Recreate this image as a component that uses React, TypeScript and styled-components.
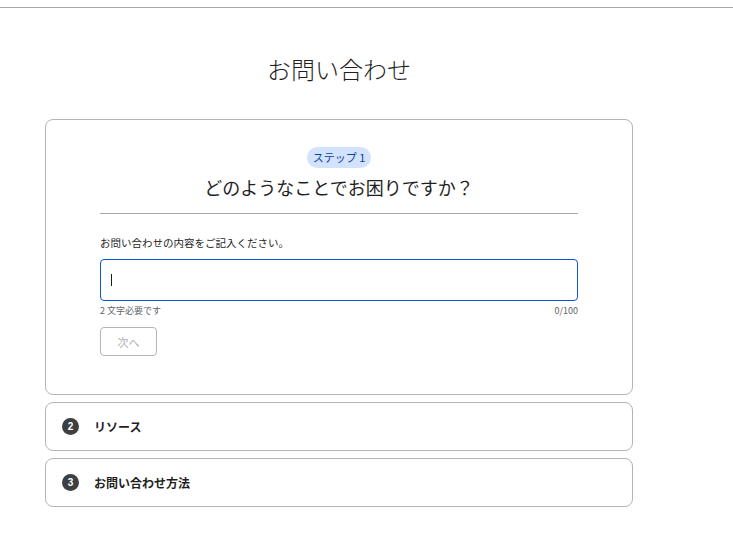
import { FC } from 'react';
import styled, { createGlobalStyle } from 'styled-components';

const colors = {
  text: '#1f1f1f',
  muted: '#5f6368',
  border: '#b4b4b4',
  line: '#a8a8a8',
  blue: '#0b57d0',
  pill: '#d3e3fd',
  pillText: '#0842a0',
  badge: '#3c4043',
};

const GlobalStyle = createGlobalStyle`
  body {
    margin: 0;
    background: #fff;
    font-family: "Noto Sans CJK JP", "Noto Sans", sans-serif;
    color: ${colors.text};
  }
`;

interface StepRowProps {
  num: number;
  label: string;
}

const StepRow: FC<StepRowProps> = ({ num, label }) => (
  <CollapsedCard>
    <Badge>{num}</Badge>
    <StepLabel>{label}</StepLabel>
  </CollapsedCard>
);

const App: FC = () => (
  <>
    <GlobalStyle />
    <TopBar />
    <Main>
      <PageTitle>お問い合わせ</PageTitle>
      <ActiveCard>
        <Pill>ステップ 1</Pill>
        <Question>どのようなことでお困りですか？</Question>
        <Divider />
        <FieldLabel>お問い合わせの内容をご記入ください。</FieldLabel>
        <InputBox>
          <Caret />
        </InputBox>
        <HelperRow>
          <span>2 文字必要です</span>
          <span>0/100</span>
        </HelperRow>
        <NextButton disabled>次へ</NextButton>
      </ActiveCard>
      <StepRow num={2} label='リソース' />
      <StepRow num={3} label='お問い合わせ方法' />
    </Main>
  </>
);

const TopBar = styled.div`
  height: 7px;
  border-bottom: 1px solid ${colors.line};
`;

const Main = styled.div`
  width: 588px;
  margin-left: 45px;
  display: flex;
  flex-direction: column;
  gap: 7px;
  padding-bottom: 20px;
`;

const PageTitle = styled.h1`
  margin: 0;
  padding: 44px 0 26px;
  text-align: center;
  font-size: 24px;
  font-weight: 300;
  line-height: 34px;
  color: ${colors.text};
`;

const ActiveCard = styled.section`
  border: 1px solid ${colors.border};
  border-radius: 8px;
  padding: 27px 54px 38px;
  display: flex;
  flex-direction: column;
  align-items: flex-start;
`;

const Pill = styled.div`
  align-self: center;
  height: 21px;
  padding: 0 6px;
  border-radius: 11px;
  background: ${colors.pill};
  color: ${colors.pillText};
  font-size: 11px;
  line-height: 21px;
`;

const Question = styled.h2`
  align-self: center;
  margin: 6px 0 0;
  font-size: 18px;
  font-weight: 400;
  line-height: 26px;
  color: ${colors.text};
`;

const Divider = styled.hr`
  width: 100%;
  margin: 13px 0 0;
  border: 0;
  border-top: 1px solid ${colors.line};
`;

const FieldLabel = styled.div`
  margin-top: 21px;
  font-size: 10.5px;
  line-height: 16px;
  color: ${colors.text};
`;

const InputBox = styled.div`
  margin-top: 8px;
  width: 100%;
  height: 42px;
  box-sizing: border-box;
  border: 1px solid ${colors.blue};
  border-radius: 4px;
  display: flex;
  align-items: center;
  padding-left: 10px;
`;

const Caret = styled.div`
  width: 1px;
  height: 12px;
  background: ${colors.text};
`;

const HelperRow = styled.div`
  width: 100%;
  margin-top: 3px;
  display: flex;
  justify-content: space-between;
  font-size: 9px;
  line-height: 13px;
  color: ${colors.muted};
`;

const NextButton = styled.button`
  margin-top: 10px;
  width: 57px;
  height: 29px;
  border: 1px solid ${colors.border};
  border-radius: 4px;
  background: #fff;
  color: #b0b0b0;
  font-family: inherit;
  font-size: 11px;
  padding: 0;
`;

const CollapsedCard = styled.div`
  height: 49px;
  box-sizing: border-box;
  border: 1px solid ${colors.border};
  border-radius: 8px;
  display: flex;
  align-items: center;
  padding-left: 16px;
  gap: 15px;
`;

const Badge = styled.div`
  width: 17px;
  height: 17px;
  border-radius: 50%;
  background: ${colors.badge};
  color: #fff;
  font-family: "Liberation Sans", sans-serif;
  font-weight: 700;
  font-size: 10px;
  display: flex;
  align-items: center;
  justify-content: center;
`;

const StepLabel = styled.div`
  font-size: 12px;
  font-weight: 700;
  color: ${colors.text};
`;

export default App;
